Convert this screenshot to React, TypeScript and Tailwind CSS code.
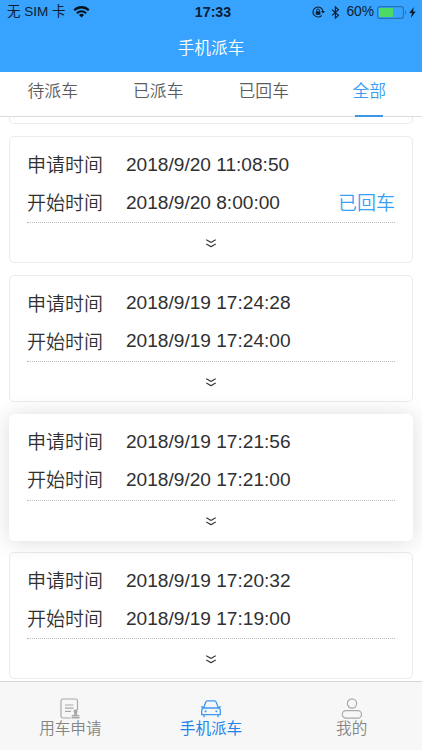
import { useState } from "react";

interface OrderType {
  id: number;
  applyTime: string;
  startTime: string;
  status?: string;
  raised?: boolean;
}

const tabs = ["待派车", "已派车", "已回车", "全部"];

const orders: OrderType[] = [
  {
    id: 1,
    applyTime: "2018/9/20 11:08:50",
    startTime: "2018/9/20 8:00:00",
    status: "已回车",
  },
  {
    id: 2,
    applyTime: "2018/9/19 17:24:28",
    startTime: "2018/9/19 17:24:00",
  },
  {
    id: 3,
    applyTime: "2018/9/19 17:21:56",
    startTime: "2018/9/20 17:21:00",
    raised: true,
  },
  {
    id: 4,
    applyTime: "2018/9/19 17:20:32",
    startTime: "2018/9/19 17:19:00",
  },
];

function StatusBar() {
  return (
    <div className="flex h-6 items-center pl-[7px] pr-[6px] text-[14px] leading-6 text-[#0b2033]">
      <div className="flex flex-1 items-center gap-[7px]">
        <span className="whitespace-nowrap text-[13.5px]">无 SIM 卡</span>
        <svg width="17" height="12" viewBox="0 0 17 12" fill="none" stroke="#06131f">
          <path d="M1.2 4.3a10.3 10.3 0 0 1 14.6 0" strokeWidth="2.3" />
          <path d="M3.9 7.2a6.5 6.5 0 0 1 9.2 0" strokeWidth="2.1" />
          <path d="M8.5 11.6 6 9.1a3.5 3.5 0 0 1 5 0z" fill="#06131f" stroke="none" />
        </svg>
      </div>

      <span className="pl-[3px] text-[14.2px] font-bold">17:33</span>

      <div className="flex flex-1 items-center justify-end">
        <svg width="13" height="12" viewBox="0 0 13 12" fill="none" stroke="#0b2033">
          <path d="M9.8 9.3A5 5 0 1 1 10.9 5" strokeWidth="1.1" />
          <path d="M9 5h4l-2 2.6z" fill="#0b2033" stroke="none" />
          <path d="M3.8 5.3h4.6v3.5H3.8z" fill="#0b2033" stroke="none" />
          <path d="M4.7 5.5V4.4a1.4 1.4 0 0 1 2.8 0v1.1" />
        </svg>
        <svg className="ml-[6px]" width="9" height="13" viewBox="0 0 9 13" fill="none" stroke="#0b2033" strokeWidth="1.2">
          <path d="m1 3.6 6.4 5.6-3 2.8V1l3 2.8L1 9.4" />
        </svg>
        <span className="ml-[6px] text-[13.8px]">60%</span>
        <svg className="ml-[3px]" width="30" height="13" viewBox="0 0 30 13">
          <rect x="0.6" y="0.6" width="25.8" height="11.8" rx="2.4" fill="none" stroke="#2373b5" strokeWidth="1.1" />
          <rect x="2" y="2" width="14" height="9" rx="0.8" fill="#4cd964" />
          <path d="M28 4.5c1.6.6 1.6 3.4 0 4z" fill="#2373b5" />
        </svg>
        <svg className="ml-[2px]" width="7" height="11" viewBox="0 0 7 11">
          <path d="M4.8 0 .2 6h2.7L1.8 11l5-6.5H4.1z" fill="#0b2033" />
        </svg>
      </div>
    </div>
  );
}

function OrderCard({ order }: { order: OrderType }) {
  return (
    <div
      className={
        order.raised
          ? "relative h-[127px] shrink-0 rounded-[5px] border border-white bg-white px-[17px] shadow-[0_1px_22px_rgba(0,0,0,0.14)]"
          : "h-[127px] shrink-0 rounded-[5px] border border-[#ebebeb] bg-white px-[17px]"
      }
    >
      <div className="border-b border-dotted border-[#bdbdbd] pt-[10px]">
        <div className="flex h-[38px] items-center">
          <span className="w-[99px] text-[19px] font-[350]">申请时间</span>
          <span className="pb-[2px] text-[19.1px]">{order.applyTime}</span>
        </div>

        <div className="flex h-[37px] items-center pt-px">
          <span className="w-[99px] text-[19px] font-[350]">开始时间</span>
          <span className="pb-[2px] text-[19.1px]">{order.startTime}</span>
          {order.status && (
            <span className="ml-auto text-[19px] font-[350] text-[#38a0f5]">
              {order.status}
            </span>
          )}
        </div>
      </div>

      <div className="flex justify-center pt-4">
        <svg width="12" height="9" viewBox="0 0 12 9" fill="none" stroke="#333" strokeWidth="1.1">
          <path d="M1.2.8C4 1.8 4.9 3.3 6 3.3S8 1.8 10.8.8M1.2 5.1C4 6.1 4.9 7.6 6 7.6s2-1.5 4.8-2.5" />
        </svg>
      </div>
    </div>
  );
}

export default function App() {
  const [active, setActive] = useState("全部");

  return (
    <div className="flex h-[750px] w-[422px] flex-col overflow-hidden bg-white font-['Liberation_Sans','Noto_Sans_CJK_SC',sans-serif] text-[#303030]">
      {/* Header */}
      <header className="h-[72px] shrink-0 bg-[#38a3ff]">
        <StatusBar />
        <h1 className="flex h-12 items-center justify-center pt-px text-[16.7px] font-[350] text-white">
          手机派车
        </h1>
      </header>

      {/* Tabs */}
      <nav className="flex h-[45px] shrink-0 border-b border-[#dcdcdc] bg-white font-[350]">
        {tabs.map((tab) => (
          <button
            key={tab}
            onClick={() => setActive(tab)}
            className={
              tab === active
                ? "relative flex-1 pb-1 text-[16.8px] text-[#3a9cf0]"
                : "relative flex-1 pb-1 text-[16.8px] text-[#5c5c5c]"
            }
          >
            {tab}
            {tab === active && (
              <span className="absolute -bottom-px left-1/2 h-[2px] w-7 -translate-x-1/2 bg-[#3f96e3]" />
            )}
          </button>
        ))}
      </nav>

      {/* Orders */}
      <main className="flex min-h-0 flex-1 flex-col gap-[11.75px] overflow-hidden px-[9px]">
        <div className="h-[7.25px] shrink-0 rounded-b-[5px] border border-t-0 border-[#ebebeb]" />
        {orders.map((order) => (
          <OrderCard key={order.id} order={order} />
        ))}
      </main>

      {/* Bottom bar */}
      <footer className="flex h-[69px] shrink-0 border-t border-[#d6d6d6] bg-[#f7f7f7] text-[15.6px] leading-5 font-[350] text-[#858585]">
        <button className="flex flex-1 flex-col items-center pt-4">
          <svg width="20" height="21" viewBox="0 0 20 21" fill="none" stroke="#a8a8a8" strokeWidth="1.2">
            <path d="M10.5 20H3a2 2 0 0 1-2-2V3a2 2 0 0 1 2-2h12.5a2 2 0 0 1 2 2v9" />
            <path d="M5 7h8.5M5 10.2h8.5M5 13.3h6" />
            <path d="M14.1 14.8a2 2 0 1 1 3 0l-.3 1.7 2.6.7v1.2h-7.7v-1.2l2.7-.7zM11.5 19h8v1.5h-8z" fill="#a8a8a8" stroke="none" />
          </svg>
          <span>用车申请</span>
        </button>

        <button className="flex flex-1 flex-col items-center pt-4 text-[#1f83ec]">
          <svg width="22" height="21" viewBox="0 0 22 21" fill="none" stroke="#3b98f3" strokeWidth="1.3">
            <path d="M3.6 10 5.8 4.1a1.8 1.8 0 0 1 1.7-1.2h7a1.8 1.8 0 0 1 1.7 1.2L18.4 10" />
            <path d="M4 10h14a2.3 2.3 0 0 1 2.3 2.3v4.3H1.7v-4.3A2.3 2.3 0 0 1 4 10zM1.2 9h2M18.8 9h2M4 16.8v2.4M18 16.8v2.4" />
            <path d="M4.7 13.3h1.8M15.5 13.3h1.8" strokeWidth="1.7" />
          </svg>
          <span className="font-normal">手机派车</span>
        </button>

        <button className="flex flex-1 flex-col items-center pt-4">
          <svg width="22" height="21" viewBox="0 0 22 21" fill="none" stroke="#aaa" strokeWidth="1.2">
            <circle cx="11" cy="5.5" r="4.6" />
            <rect x="1.3" y="12.7" width="19.2" height="7.4" rx="3.7" />
          </svg>
          <span>我的</span>
        </button>
      </footer>
    </div>
  );
}
